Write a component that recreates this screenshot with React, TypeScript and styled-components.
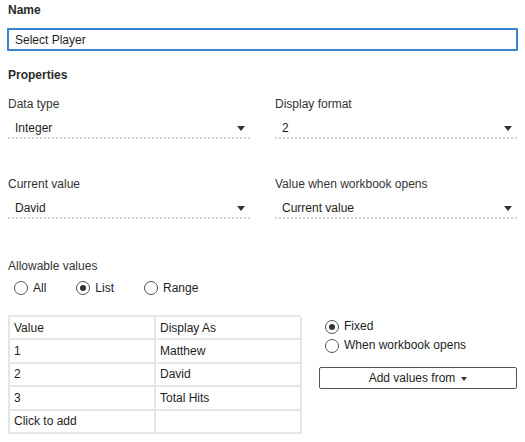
import React from "react";
import styled, { createGlobalStyle } from "styled-components";

const GlobalStyle = createGlobalStyle`
  body {
    margin: 0;
    background: #ffffff;
    font-family: "Liberation Sans", Arial, sans-serif;
    font-size: 12px;
    color: #2b2b2b;
  }
`;

//layout
const Page = styled.div`
  width: 509px;
  padding: 2px 8px 0 8px;
`;

const SectionTitle = styled.div<{ $top: number }>`
  font-weight: bold;
  line-height: 16px;
  margin-top: ${(p) => p.$top}px;
`;

const NameInput = styled.div`
  margin: 10px -1px 0 -1px;
  height: 19px;
  border: 2px solid #3b82d0;
  border-radius: 1px;
  padding-left: 6px;
  display: flex;
  align-items: center;
  color: #1e1e1e;
`;

const Grid = styled.div<{ $top: number }>`
  display: grid;
  grid-template-columns: 242px 242px;
  column-gap: 25px;
  margin-top: ${(p) => p.$top}px;
`;

const Field = styled.div``;

const Label = styled.div<{ $top?: number }>`
  line-height: 16px;
  color: #333;
  margin-top: ${(p) => p.$top ?? 0}px;
`;

const Select = styled.div`
  margin-top: 5px;
  height: 18px;
  padding: 2px 5px 0 7px;
  border-bottom: 2px dotted #cfd3d6;
  display: flex;
  align-items: center;
  justify-content: space-between;
  color: #1e1e1e;
`;

const Caret = styled.span`
  width: 0;
  height: 0;
  border-left: 4px solid transparent;
  border-right: 4px solid transparent;
  border-top: 5px solid #333;
`;

//radios
const RadioRow = styled.div`
  display: flex;
  gap: 30px;
  margin-top: 6px;
  padding-left: 6px;
  line-height: 16px;
`;

const RadioItem = styled.label`
  display: flex;
  align-items: center;
  gap: 5px;
  color: #1e1e1e;
`;

const Circle = styled.span<{ $on?: boolean }>`
  box-sizing: border-box;
  width: 14px;
  height: 14px;
  border-radius: 50%;
  border: 1px solid #555;
  display: flex;
  align-items: center;
  justify-content: center;
  &::after {
    content: "";
    width: 6px;
    height: 6px;
    border-radius: 50%;
    background: ${(p) => (p.$on ? "#333" : "transparent")};
  }
`;

const Radio = ({ label, on }: { label: string; on?: boolean }) => (
  <RadioItem>
    <Circle $on={on} />
    {label}
  </RadioItem>
);

//table + side
const Bottom = styled.div`
  display: flex;
  align-items: flex-start;
  margin-top: 19px;
`;

const Table = styled.div`
  width: 292px;
  display: grid;
  grid-template-columns: 146px 146px;
  border-top: 2px solid #e2e6e9;
  border-left: 2px solid #e2e6e9;
  box-sizing: border-box;
`;

const Cell = styled.div`
  height: 21.4px;
  border-right: 2px solid #e2e6e9;
  border-bottom: 2px solid #e2e6e9;
  display: flex;
  align-items: center;
  padding-left: 4px;
  color: #1e1e1e;
`;

const Side = styled.div`
  margin-left: 19px;
  width: 198px;
  padding-top: 2px;
`;

const SideRadios = styled.div`
  display: flex;
  flex-direction: column;
  padding-left: 6px;
  line-height: 19px;
`;

const AddButton = styled.div`
  margin-top: 12px;
  height: 20px;
  border: 1px solid #555;
  border-radius: 2px;
  display: flex;
  align-items: center;
  justify-content: center;
  gap: 6px;
  color: #1e1e1e;
`;

const SmallCaret = styled(Caret)`
  border-left-width: 3.5px;
  border-right-width: 3.5px;
  border-top-width: 4px;
  margin-top: 1px;
`;

const rows = [
  ["Value", "Display As"],
  ["1", "Matthew"],
  ["2", "David"],
  ["3", "Total Hits"],
  ["Click to add", ""],
];

const App: React.FC = () => {
  return (
    <>
      <GlobalStyle />
      <Page>
        <SectionTitle $top={0}>Name</SectionTitle>
        <NameInput>Select Player</NameInput>
        <SectionTitle $top={16}>Properties</SectionTitle>
        <Grid $top={13}>
          <Field>
            <Label>Data type</Label>
            <Select>
              Integer
              <Caret />
            </Select>
          </Field>
          <Field>
            <Label>Display format</Label>
            <Select>
              2
              <Caret />
            </Select>
          </Field>
        </Grid>
        <Grid $top={37}>
          <Field>
            <Label>Current value</Label>
            <Select>
              David
              <Caret />
            </Select>
          </Field>
          <Field>
            <Label>Value when workbook opens</Label>
            <Select>
              Current value
              <Caret />
            </Select>
          </Field>
        </Grid>
        <Label $top={39}>Allowable values</Label>
        <RadioRow>
          <Radio label="All" />
          <Radio label="List" on />
          <Radio label="Range" />
        </RadioRow>
        <Bottom>
          <Table>
            {rows.map((r, i) => (
              <React.Fragment key={i}>
                <Cell>{r[0]}</Cell>
                <Cell>{r[1]}</Cell>
              </React.Fragment>
            ))}
          </Table>
          <Side>
            <SideRadios>
              <Radio label="Fixed" on />
              <Radio label="When workbook opens" />
            </SideRadios>
            <AddButton>
              Add values from
              <SmallCaret />
            </AddButton>
          </Side>
        </Bottom>
      </Page>
    </>
  );
};

export default App;
